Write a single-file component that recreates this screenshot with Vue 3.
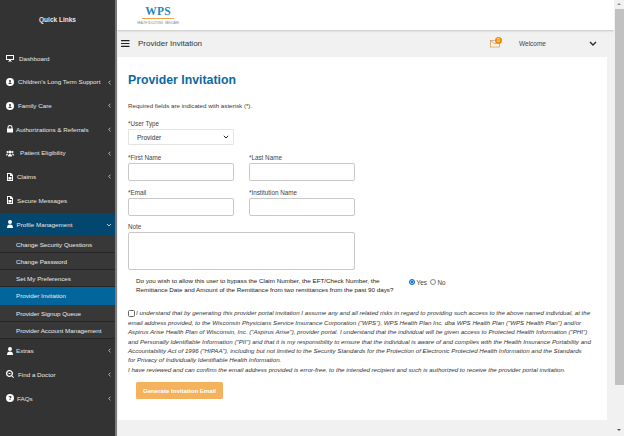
<script setup>
const menuTop = [
  { label: "Dashboard", icon: "monitor", x: 13 },
  { label: "Children's Long Term Support", icon: "badge", arrow: true, x: 12 },
  { label: "Family Care", icon: "badge", arrow: true, x: 12 },
  { label: "Authorizations & Referrals", icon: "lock", arrow: true, x: 10 },
  { label: "Patient Eligibility", icon: "users", arrow: true, x: 14 },
  { label: "Claims", icon: "file", arrow: true, x: 11 },
  { label: "Secure Messages", icon: "file", x: 11 },
];
const subs = [
  { label: "Change Security Questions" },
  { label: "Change Password" },
  { label: "Set My Preferences" },
  { label: "Provider Invitation", active: true },
  { label: "Provider Signup Queue" },
  { label: "Provider Account Management" },
];
const menuBottom = [
  { label: "Extras", icon: "user", arrow: true, x: 10 },
  { label: "Find a Doctor", icon: "search", arrow: true, x: 12 },
  { label: "FAQs", icon: "help", arrow: true, x: 11 },
];
const legal = [
  "email address provided, to the Wisconsin Physicians Service Insurance Corporation (\"WPS\"), WPS Health Plan Inc. dba WPS Health Plan (\"WPS Health Plan\") and/or",
  "Aspirus Arise Health Plan of Wisconsin, Inc. (\"Aspirus Arise\"), provider portal. I understand that the individual will be given access to Protected Health Information (\"PHI\")",
  "and Personally Identifiable Information (\"PII\") and that it is my responsibility to ensure that the individual is aware of and complies with the Health Insurance Portability and",
  "Accountability Act of 1996 (\"HIPAA\"), including but not limited to the Security Standards for the Protection of Electronic Protected Health Information and the Standards",
  "for Privacy of Individually Identifiable Health Information.",
  "I have reviewed and can confirm the email address provided is error-free, to the intended recipient and such is authorized to receive the provider portal invitation.",
];
</script>

<template>
  <div class="page">
    <aside class="sidebar">
      <div class="quick">Quick Links</div>
      <nav>
        <div v-for="m in menuTop" :key="m.label" class="item">
          <span class="icon" :style="{ width: m.x + 'px' }">
            <svg width="8" height="8" viewBox="0 0 16 16" fill="#fff">
              <path v-if="m.icon === 'monitor'" fill-rule="evenodd" d="M0 2h16v10h-6v2h2v1H4v-1h2v-2H0zM2 4v6h12V4z" />
              <path v-else-if="m.icon === 'badge'" fill-rule="evenodd" d="M8 0a8 8 0 1 1 0 16A8 8 0 0 1 8 0zm0 4a2 2 0 1 0 0 4 2 2 0 0 0 0-4zM5 12h6c0-2-1-3-3-3s-3 1-3 3z" />
              <path v-else-if="m.icon === 'lock'" fill-rule="evenodd" d="M3 7V5a5 5 0 0 1 10 0v2h1v8H2V7zm2 0h6V5a3 3 0 0 0-6 0z" />
              <path v-else-if="m.icon === 'users'" d="M8 3a3 3 0 1 1 0 6 3 3 0 0 1 0-6zM3 4a2 2 0 1 1 0 4 2 2 0 0 1 0-4zm10 0a2 2 0 1 1 0 4 2 2 0 0 1 0-4zM4 15c0-3 1-5 4-5s4 2 4 5zM0 13c0-2 1-4 3-4l1 1c-1 1-1.500 2-1.500 3zm16 0c0-2-1-4-3-4l-1 1c1 1 1.500 2 1.500 3z" />
              <path v-else fill-rule="evenodd" d="M2 0h8l4 4v12H2zm2 2v12h8V6H8V2zm1 6h6v5H5z" />
            </svg>
          </span>
          <span class="label">{{ m.label }}</span>
          <svg v-if="m.arrow" class="arrow" width="3" height="5" viewBox="0 0 3 5"><path d="M2.500.7L.7 2.500l1.800 1.800" fill="none" stroke="#d5d5d5" stroke-width=".8" /></svg>
        </div>
        <div class="item open">
          <span class="icon" :style="{ width: '10.500px' }">
            <svg width="8" height="8" viewBox="0 0 16 16" fill="#fff"><path d="M8 0a4 4 0 1 1 0 8 4 4 0 0 1 0-8zM2 16c0-5 2-7 6-7s6 2 6 7z" /></svg>
          </span>
          <span class="label">Profile Management</span>
          <svg class="down" width="6" height="4" viewBox="0 0 6 4"><path d="M1 1l2 2 2-2" fill="none" stroke="#cfd8df" stroke-width=".9" /></svg>
        </div>
        <div v-for="s in subs" :key="s.label" class="sub" :class="{ active: s.active }">{{ s.label }}</div>
        <div v-for="m in menuBottom" :key="m.label" class="item">
          <span class="icon" :style="{ width: m.x + 'px' }">
            <svg width="8" height="8" viewBox="0 0 16 16" fill="#fff">
              <path v-if="m.icon === 'user'" d="M8 0a4 4 0 1 1 0 8 4 4 0 0 1 0-8zM2 16c0-5 2-7 6-7s6 2 6 7z" />
              <path v-else-if="m.icon === 'search'" fill-rule="evenodd" d="M7 0a7 7 0 0 1 5.500 11.300L16 14.600 14.500 16 11 12.600A7 7 0 1 1 7 0zm0 2.500a4.500 4.500 0 1 0 0 9 4.500 4.500 0 0 0 0-9zM5 6h4v2H5z" />
              <path v-else fill-rule="evenodd" d="M8 0a8 8 0 1 1 0 16A8 8 0 0 1 8 0zM5 6h2c0-1 2-1 2 0 0 1-2 1-2 3h2c0-1 2-1.500 2-3 0-3-6-3-6 0zm2 4v2h2v-2z" />
            </svg>
          </span>
          <span class="label">{{ m.label }}</span>
          <svg class="arrow" width="3" height="5" viewBox="0 0 3 5"><path d="M2.500.7L.7 2.500l1.800 1.800" fill="none" stroke="#d5d5d5" stroke-width=".8" /></svg>
        </div>
      </nav>
    </aside>

    <div class="main">
      <header class="brand">
        <div class="logo">
          <div class="wps">WPS</div>
          <div class="rule"></div>
          <div class="tag">HEALTH SOLUTIONS · MEDICARE</div>
        </div>
      </header>
      <div class="bar">
        <svg class="burger" width="9" height="7" viewBox="0 0 9 7"><path d="M0 .7h8.500M0 3.500h8.500M0 6.300h8.500" stroke="#222" stroke-width="1.200" /></svg>
        <span class="crumb">Provider Invitation</span>
        <span class="mail">
          <svg width="11" height="9" viewBox="0 0 11 9"><rect x=".5" y="1.500" width="9" height="6.500" fill="#fbf6ec" stroke="#d9a35e" stroke-width=".8" /><path d="M.5 1.500l4.500 3.500 4.500-3.500" fill="none" stroke="#8b8f96" stroke-width=".7" /></svg>
          <span class="badge">0</span>
        </span>
        <span class="welcome">Welcome</span>
        <svg class="chev" width="8" height="5" viewBox="0 0 8 5"><path d="M1 1l3 3 3-3" fill="none" stroke="#2b2b2b" stroke-width="1.400" /></svg>
      </div>

      <main class="card">
        <h1>Provider Invitation</h1>
        <p class="req">Required fields are indicated with asterisk (*).</p>

        <label class="lbl first">*User Type</label>
        <div class="select"><span>Provider</span><svg width="6" height="4" viewBox="0 0 6 4"><path d="M.8 .8l2.200 2.200 2.200-2.200" fill="none" stroke="#222" stroke-width="1" /></svg></div>

        <div class="grid">
          <div class="field"><label class="lbl">*First Name</label><div class="input"></div></div>
          <div class="field"><label class="lbl">*Last Name</label><div class="input"></div></div>
          <div class="field"><label class="lbl">*Email</label><div class="input"></div></div>
          <div class="field"><label class="lbl">*Institution Name</label><div class="input"></div></div>
        </div>

        <label class="lbl note-l">Note</label>
        <div class="input note"></div>

        <div class="bypass">
          <p>Do you wish to allow this user to bypass the Claim Number, the EFT/Check Number, the<br />Remittance Date and Amount of the Remittance from two remittances from the past 90 days?</p>
          <div class="radios">
            <span class="radio on"></span><span class="rtxt">Yes</span>
            <span class="radio"></span><span class="rtxt">No</span>
          </div>
        </div>

        <div class="legal">
          <div class="line"><span class="check"></span>I understand that by generating this provider portal invitation I assume any and all related risks in regard to providing such access to the above named individual, at the</div>
          <div v-for="l in legal" :key="l" class="line">{{ l }}</div>
        </div>

        <button class="btn" type="button">Generate Invitation Email</button>
      </main>
    </div>

    <div class="scroll">
      <span class="tri up"></span>
      <div class="thumb"></div>
      <span class="tri dn"></span>
    </div>
  </div>
</template>

<style scoped>
.page { display: flex; width: 624px; height: 436px; overflow: hidden; font-family: "Liberation Sans", Arial, sans-serif; background: #f1f1f1; color: #333; }
.sidebar { width: 115px; flex: none; background: #333; border-right: 2px solid #7d7d7d; color: #eee; }
.quick { height: 46.500px; box-sizing: border-box; padding-top: 16px; text-align: center; font-size: 6.500px; font-weight: 700; line-height: 8px; color: #e8e8e8; }
.item { height: 23.650px; display: flex; align-items: center; padding-left: 6px; font-size: 6.250px; color: #e6e6e6; position: relative; }
.icon { flex: none; display: flex; align-items: center; }
.label { white-space: nowrap; }
.arrow { position: absolute; left: 108px; top: 9.500px; }
.down { position: absolute; left: 106px; top: 10px; }
.open { background: #03466e; height: 23px; margin-top: 1px; }
.sub { height: 17px; box-sizing: border-box; padding-left: 16px; font-size: 6.250px; line-height: 17px; border-bottom: 1px solid #262626; background: #383838; color: #ececec; white-space: nowrap; }
.sub.active { background: #02669d; height: 18px; line-height: 18px; border-bottom: 0; }

.main { width: 497px; flex: none; display: flex; flex-direction: column; }
.brand { height: 30px; background: #fff; box-shadow: 0 1px 2px rgba(0,0,0,.18); position: relative; flex: none; }
.logo { margin-left: 15px; width: 52px; text-align: center; padding-top: 6px; }
.wps { font-family: "Liberation Serif", serif; font-weight: 700; font-size: 11.500px; line-height: 11px; color: #1f86c1; letter-spacing: .2px; }
.rule { height: 1px; width: 32px; margin: 1px auto 0; background: #f0a347; }
.tag { font-size: 2.600px; line-height: 4px; margin-top: 3px; color: #777; white-space: nowrap; }
.bar { height: 27px; flex: none; display: flex; align-items: center; padding-left: 4px; box-sizing: border-box; background: #f1f1f1; }
.burger { flex: none; }
.crumb { margin-left: 8px; width: 76px; flex: none; white-space: nowrap; font-size: 8px; color: #333; }
.mail { margin-left: 276px; position: relative; width: 11px; height: 9px; flex: none; display: block; }
.mail svg { display: block; }
.badge { position: absolute; left: 5px; top: -2.500px; width: 7px; height: 7px; border-radius: 50%; background: #f08c00; color: #fff; font-size: 5px; line-height: 7px; text-align: center; }
.welcome { margin-left: 18px; width: 27px; flex: none; white-space: nowrap; font-size: 6.500px; color: #444; }
.chev { margin-left: 43px; flex: none; }

.card { margin: 0 7px 0 1px; height: 363px; background: #fff; padding: 0 10px; box-sizing: border-box; position: relative; flex: none; }
h1 { margin: 0; padding-top: 14px; font-size: 12.300px; line-height: 18px; font-weight: 700; color: #0b69a3; font-family: "Liberation Sans", Arial, sans-serif; }
.req { margin: 13px 0 0; font-size: 6.200px; line-height: 8px; color: #3a3a3a; }
.lbl { display: block; font-size: 6.300px; line-height: 8px; color: #444; }
.first { margin-top: 10px; }
.select { width: 106px; height: 16px; box-sizing: border-box; margin-top: 1px; padding: 0 4px 0 8px; display: flex; align-items: center; justify-content: space-between; font-size: 6.500px; color: #333; border: 1px solid #e4e4e4; border-radius: 1px; background: #fff; }
.grid { display: grid; grid-template-columns: 106px 106px; column-gap: 15px; row-gap: 8px; margin-top: 9px; }
.input { height: 18px; box-sizing: border-box; margin-top: 1px; border: 1px solid #c9c9c9; border-radius: 2px; background: #fff; }
.note-l { margin-top: 6.500px; }
.note { width: 227px; height: 38px; }
.bypass { display: flex; margin-top: 6px; padding-left: 8px; }
.bypass p { margin: 0; width: 273px; font-size: 6.250px; line-height: 9.200px; color: #222; white-space: nowrap; }
.radios { display: flex; align-items: center; height: 9px; margin-top: 2px; font-size: 6.400px; color: #444; }
.radio { width: 6px; height: 6px; box-sizing: border-box; border: .7px solid #888; border-radius: 50%; background: #fff; }
.radio.on { border: 1px solid #0a6ed1; background: #1a73e8; box-shadow: inset 0 0 0 .6px #fff; }
.rtxt { margin: 0 3px 0 1.500px; }
.legal { margin-top: 14.500px; font-size: 6.160px; line-height: 9.400px; font-style: italic; color: #333; white-space: nowrap; }
.line { display: flex; align-items: center; height: 9.400px; }
.check { width: 7px; height: 7px; margin-right: 1px; box-sizing: border-box; border: 1px solid #666; border-radius: 1.500px; background: #fff; flex: none; }
.btn { display: block; margin: 8px 0 0 8px; width: 87px; height: 17px; padding: 0; border: 0; border-radius: 1.500px; background: #f4b25c; color: #fff; font: 700 6.100px/17px "Liberation Sans", Arial, sans-serif; }

.scroll { width: 10px; flex: none; background: #f1f1f1; position: relative; display: flex; flex-direction: column; align-items: center; }
.thumb { width: 9px; height: 376px; margin-top: 4px; background: #c1c1c1; flex: none; }
.tri { width: 0; height: 0; border-left: 2px solid transparent; border-right: 2px solid transparent; flex: none; }
.up { margin-top: 3px; border-bottom: 2px solid #8a8a8a; }
.dn { margin-top: 44px; border-top: 2px solid #555; }
</style>
